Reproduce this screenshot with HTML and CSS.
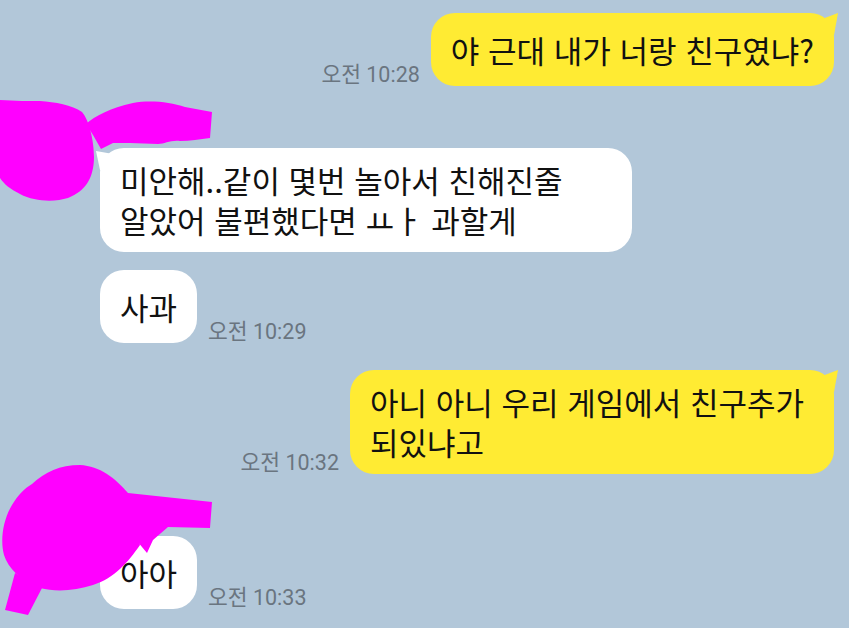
FILE: index.html
```html
<!DOCTYPE html>
<html lang="ko">
<head>
<meta charset="utf-8">
<title>Chat</title>
<link rel="stylesheet" href="styles.css">
</head>
<body>
<div class="chat">
  <div class="row me first">
    <span class="time">오전 10:28</span>
    <div class="bubble yellow tail-right">야 근대 내가 너랑 친구였냐?</div>
  </div>
  <div class="row other gap-new">
    <div class="bubble white tail-left wide-other">미안해..같이 몇번 놀아서 친해진줄<br>알았어 불편했다면 ㅛㅏ 과할게</div>
  </div>
  <div class="row other gap-cont">
    <div class="bubble white">사과</div>
    <span class="time">오전 10:29</span>
  </div>
  <div class="row me gap-me">
    <span class="time">오전 10:32</span>
    <div class="bubble yellow tail-right wide-me">아니 아니 우리 게임에서 친구추가<br>되있냐고</div>
  </div>
  <div class="row other gap-new">
    <div class="bubble white tail-left">아아</div>
    <span class="time">오전 10:33</span>
  </div>
</div>
<svg class="scribble" width="849" height="628" viewBox="0 0 849 628" xmlns="http://www.w3.org/2000/svg">
  <g fill="#ff00ff">
    <path d="M0,100 L22,101 L40,101 C55,102 72,105 82,112 C89,120 94,140 94,157 C94,177 86,191 68,198 C55,202 35,202 20,194 C10,189 4,184 0,178 Z"/>
    <path d="M86,124 C95,116 110,108 133,103 C150,100 170,102 185,107 L212,112 L210,138 C200,139 190,141 180,141 C170,140 165,144 158,144 L130,143 L113,143 L101,149 L93,135 Z"/>
    <path d="M80,465 C100,466 115,478 128,493 L140,545 C128,562 115,578 93,585 C75,591 55,592 40,588 C20,580 8,568 4,555 C0,540 3,520 12,505 C18,495 25,488 32,484 C45,472 60,465 80,465 Z"/>
    <path d="M118,497 L128,493 L212,502 L210,528 L168,527 L153,540 L147,553 L137,541 L117,557 Z"/>
    <path d="M15,573 L42,588 L28,615 L5,610 Z"/>
  </g>
</svg>
</body>
</html>
```

FILE: styles.css
```css
html, body {
  margin: 0;
  padding: 0;
}
body {
  width: 849px;
  height: 628px;
  overflow: hidden;
  background: #b2c7d9;
  position: relative;
  font-family: "Roboto", "Noto Sans CJK KR", sans-serif;
}
.chat {
  display: flex;
  flex-direction: column;
}
.row {
  display: flex;
  align-items: flex-end;
}
.row.me {
  justify-content: flex-end;
  padding-right: 15px;
}
.row.other {
  padding-left: 100px;
}
.first { margin-top: 13px; }
.gap-new { margin-top: 62px; }
.gap-cont { margin-top: 18px; }
.gap-me { margin-top: 27px; }

.bubble {
  position: relative;
  box-sizing: border-box;
  min-height: 73px;
  padding: 12px 20px;
  border-radius: 24px;
  display: flex;
  align-items: center;
  font-family: "Noto Sans CJK KR", "Roboto", sans-serif;
  font-size: 31px;
  line-height: 40px;
  color: #111111;
}
.yellow { background: #ffeb33; }
.white { background: #ffffff; }
.wide-other { width: 532px; }
.wide-me { width: 484px; }

.tail-right::before {
  content: "";
  position: absolute;
  top: 0;
  right: -6px;
  width: 24px;
  height: 24px;
  background: #ffeb33;
  clip-path: polygon(6px 6px, 22px 0, 18px 22px, 6px 22px);
}
.tail-left::before {
  content: "";
  position: absolute;
  top: 0;
  left: -5px;
  width: 20px;
  height: 22px;
  background: #ffffff;
  clip-path: polygon(1px 3px, 18px 6px, 18px 22px, 5px 22px);
}

.time {
  font-size: 21.5px;
  line-height: 22px;
  color: #6a7580;
  margin: 0 11px;
  white-space: nowrap;
}
.scribble {
  position: absolute;
  left: 0;
  top: 0;
  pointer-events: none;
}
```
